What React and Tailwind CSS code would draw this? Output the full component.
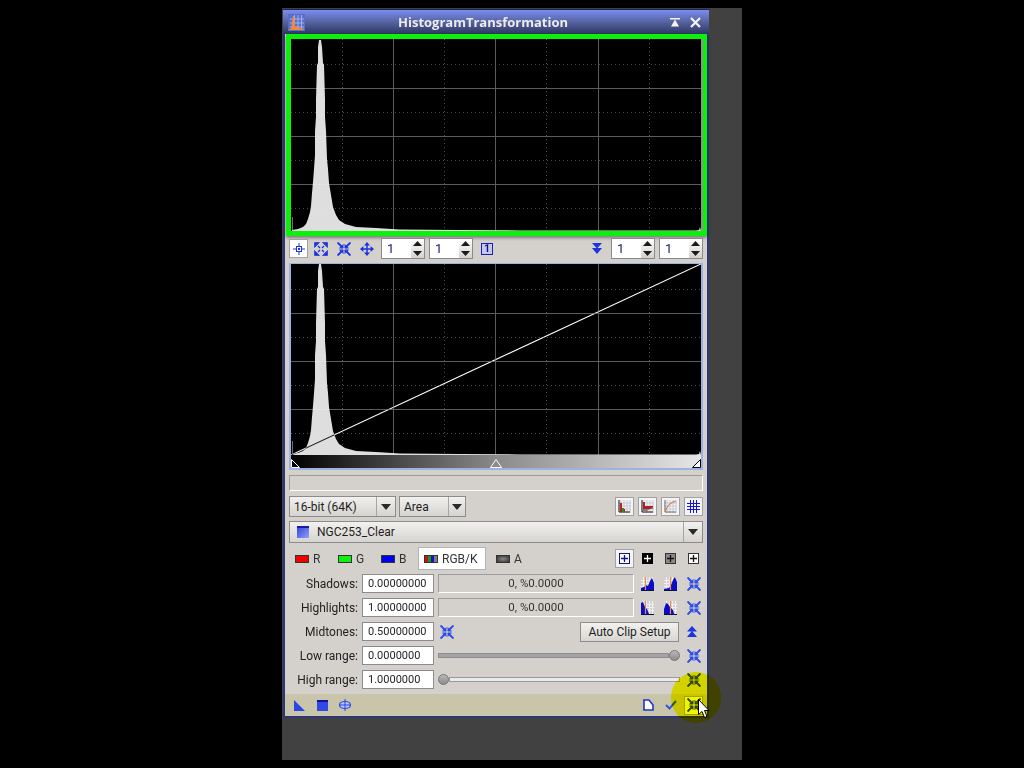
import React from 'react'

// histogram outline, screen x / distance from the base of the plot
const PROFILE = [
  [292, 0], [292, 1], [298, 2], [303, 4], [306, 7], [308, 12], [310, 19], [311, 25], [312, 38],
  [313, 49], [314, 62], [315, 76], [315, 100], [316, 114], [316, 132], [317, 166], [318, 168], [318, 184], [319, 191],
  [321, 191], [322, 184], [323, 168], [324, 166], [325, 132], [325, 114], [326, 100], [327, 72], [328, 62], [329, 48],
  [331, 36], [333, 24], [336, 16], [339, 11], [345, 7], [356, 4], [376, 3], [400, 1.5], [460, 1], [520, 0.6], [696, 0.4],
  [699, 1], [700, 4], [701, 0],
]

function Plot({ width, height, curve }) {
  const left = 291
  const pts = PROFILE.map(([x, h]) => `${x - left},${height - h}`).join(' ')
  const majorX = [393, 495, 598].map(x => x - left)
  const minorX = [342, 444, 546, 649].map(x => x - left)
  const majorY = [49, 97, 145]
  const minorY = [25, 73, 121, 169]
  return (
    <svg width={width} height={height} className="block bg-black shrink-0">
      {minorX.map(x => <line key={x} x1={x + 0.5} x2={x + 0.5} y1="0" y2={height} stroke="#4c4c4c" strokeDasharray="1 3" />)}
      {minorY.map(y => <line key={y} y1={y + 0.5} y2={y + 0.5} x1="0" x2={width} stroke="#4c4c4c" strokeDasharray="1 3" />)}
      {majorX.map(x => <line key={x} x1={x + 0.5} x2={x + 0.5} y1="0" y2={height} stroke="#5c5c5c" />)}
      {majorY.map(y => <line key={y} y1={y + 0.5} y2={y + 0.5} x1="0" x2={width} stroke="#5c5c5c" />)}
      <line x1="1.5" x2="1.5" y1={height - 14} y2={height} stroke="#707070" />
      <polygon points={`0,${height} ${pts} ${width},${height}`} fill="#eaeaea" fillOpacity="0.95" />
      {curve && <line x1="0" y1={height} x2={width} y2="0" stroke="#ffffff" strokeWidth="1.1" className="mix-blend-difference" />}
    </svg>
  )
}

function Collapse({ color = '#2a48e6', className = '' }) {
  return (
    <svg width="14" height="14" viewBox="0 0 14 14" className={className}>
      <g stroke={color} fill={color}>
        <path d="M0.5 0.5L4.5 4.5M13.5 0.5L9.5 4.5M0.5 13.5L4.5 9.5M13.5 13.5L9.5 9.5" strokeWidth="1.9" />
        <path d="M6.2 6.2H2.4L6.2 2.4ZM7.8 6.2H11.6L7.8 2.4ZM6.2 7.8H2.4L6.2 11.6ZM7.8 7.8H11.6L7.8 11.6Z" strokeWidth="0.5" />
      </g>
    </svg>
  )
}

function Expand() {
  return (
    <svg width="14" height="14" viewBox="0 0 14 14">
      <g fill="#1c34e0" stroke="#1c34e0">
        <path d="M0.5 0.5H5.5L0.5 5.5ZM13.5 0.5H8.5L13.5 5.5ZM0.5 13.5H5.5L0.5 8.5ZM13.5 13.5H8.5L13.5 8.5Z" strokeWidth="0.7" />
        <path d="M4 4L6 6M10 4L8 6M4 10L6 8M10 10L8 8" strokeWidth="1.3" fill="none" />
      </g>
    </svg>
  )
}

function Pan() {
  return (
    <svg width="14" height="14" viewBox="0 0 14 14">
      <path d="M7 1V13M1 7H13" stroke="#1c34e0" strokeWidth="1.5" />
      <path d="M7 0L10 3.4H4ZM7 14L10 10.6H4ZM0 7L3.4 4V10ZM14 7L10.6 4V10Z" fill="#1c34e0" />
    </svg>
  )
}

function Crosshair() {
  return (
    <svg width="12" height="12" viewBox="0 0 12 12">
      <path d="M6 0V12M0 6H12" stroke="#1c34e0" />
      <rect x="3.5" y="3.5" width="5" height="5" fill="#ffffff" stroke="#1c34e0" />
      <rect x="5" y="5" width="2" height="2" fill="#1c34e0" />
    </svg>
  )
}

function Arrow({ up }) {
  return (
    <svg width="9" height="5" viewBox="0 0 9 5">
      <path d={up ? 'M4.5 0L9 5H0Z' : 'M4.5 5L9 0H0Z'} fill="#1a1a1a" />
    </svg>
  )
}

function Spin({ className = '' }) {
  return (
    <div className={`w-[44px] h-[21px] flex border border-[#8a8a8a] bg-white ${className}`}>
      <span className="w-[29px] pl-[5px] text-[13px] leading-[19px] text-[#16166e]">1</span>
      <div className="flex-1 flex flex-col items-center justify-around bg-gradient-to-b from-[#ffffff] to-[#d4d2ce]">
        <Arrow up />
        <Arrow />
      </div>
    </div>
  )
}

function Combo({ label, className = '', arrowWidth = 'w-[19px]', icon }) {
  return (
    <div className={`flex items-center border border-[#8c8c8c] bg-gradient-to-b from-[#f2f1ef] to-[#d6d4d0] text-[12px] text-[#1e1e1e] ${className}`}>
      {icon}
      <span className="flex-1 pl-[4px] whitespace-nowrap">{label}</span>
      <div className={`h-full flex items-center justify-center border-l border-[#a5a5a5] ${arrowWidth}`}>
        <svg width="10" height="6" viewBox="0 0 10 6"><path d="M0 0H10L5 6Z" fill="#2a2a2a" /></svg>
      </div>
    </div>
  )
}

function ToolBtn({ children, className = '' }) {
  return (
    <div className={`w-[19px] h-[19px] flex items-center justify-center border border-[#a2a2a2] bg-[#f4f4f4] ${className}`}>
      {children}
    </div>
  )
}

function Bars({ kind }) {
  return (
    <svg width="13" height="13" viewBox="0 0 13 13">
      <path d="M3 0V13M6 0V13M9 0V13M12 0V13M0 3H13M0 6H13M0 9H13" stroke="#c8c8d8" />
      {kind === 0 && <path d="M1 0V12H12" stroke="#111" fill="none" />}
      {kind === 0 && <path d="M2 12V3H4V9H7V12Z" fill="#c02020" />}
      {kind === 0 && <path d="M4 12V8H6V12Z" fill="#209020" />}
      {kind === 1 && <path d="M1 0V12H12" stroke="#111" fill="none" />}
      {kind === 1 && <path d="M2 9V2H4V6H12V9Z" fill="#b02020" />}
      {kind === 1 && <path d="M2 12V9H12V7L6 11Z" fill="#808080" />}
      {kind === 2 && <path d="M1 0V12H12" stroke="#666" fill="none" />}
      {kind === 2 && <path d="M1 12C3 6 6 2 12 1" stroke="#d08050" strokeWidth="1.2" fill="none" />}
    </svg>
  )
}

function Plus({ bg, fg, border }) {
  return (
    <div className={`w-[11px] h-[11px] flex items-center justify-center border ${bg} ${border}`}>
      <svg width="7" height="7" viewBox="0 0 7 7"><path d="M3.5 0V7M0 3.5H7" stroke={fg} strokeWidth="1.3" /></svg>
    </div>
  )
}

// little histogram with the clipping marker; shape and marker differ per button
const CLIP = {
  a: { d: 'M0 13V11L3 10L5 8L7 9L9 4L11 1L13 6V13Z', line: 'M4.5 0V13' },
  b: { d: 'M0 13V12L5 11L7 8L9 3L11 0L13 5V13Z', line: 'M6.5 0V13' },
  c: { d: 'M0 13V2L2 1L4 6L6 8L8 13Z', line: 'M4.5 0V13' },
  d: { d: 'M0 13V8L2 2L4 3L6 6L9 9L10 13Z', line: 'M6.5 0V13' },
}

function Clip({ kind }) {
  const { d, line } = CLIP[kind]
  return (
    <svg width="13" height="14" viewBox="0 0 13 14">
      <path d="M2.5 0V13M5.5 0V13M8.5 0V13M11.5 0V13M0 3.5H13M0 6.5H13M0 9.5H13" stroke="#f0f0f4" />
      <path d={d} fill="#0c0cc4" />
      <path d={line} stroke="#e89050" strokeWidth="1.2" />
      <path d="M0 13.5H13" stroke="#101040" />
    </svg>
  )
}

function Chan({ swatch, label, className = '' }) {
  return (
    <div className={`flex items-center text-[12px] text-[#333] ${className}`}>
      {swatch}
      <span className="ml-[4px]">{label}</span>
    </div>
  )
}

function Input({ value }) {
  return (
    <div className="w-[72px] h-[19px] shrink-0 border border-[#8c8c8c] bg-white pl-[5px] text-[11px] leading-[18px] text-[#1e1e1e]">
      {value}
    </div>
  )
}

function Row({ label, value, children }) {
  return (
    <div className="flex items-center h-[19px] mb-[5px]">
      <span className="w-[73px] text-right text-[12px] text-[#222] whitespace-nowrap">{label}</span>
      <div className="w-[4px]" />
      <Input value={value} />
      {children}
    </div>
  )
}

function Readout() {
  return (
    <div className="w-[196px] h-[19px] ml-[4px] text-center text-[11.5px] leading-[17px] text-[#333] border border-t-[#9c9c9c] border-l-[#9c9c9c] border-r-white border-b-white">
      0, %0.0000
    </div>
  )
}

function Thumb() {
  return <div className="w-[11px] h-[11px] shrink-0 rounded-full border border-[#777] bg-gradient-to-b from-[#b8b8b8] to-[#8c8c8c]" />
}

export default function App() {
  return (
    <div className="relative h-screen bg-black overflow-hidden font-['Roboto',sans-serif]">
      <div className="ml-[282px] mt-[8px] w-[460px] h-[752px] pt-px pl-px bg-[#414141]">
        <div className="w-[426px] h-[709px] flex flex-col bg-[#d4d1cd] border-x-2 border-b-2 border-x-[#2c3678] border-b-[#2c3678]">
          {/* Title bar */}
          <div className="h-[25px] -mx-[2px] pt-px flex items-center bg-gradient-to-b from-[#7c8ef2] via-[#55639f] to-[#2e3764] border-t border-[#1d2350]">
            <svg width="17" height="17" viewBox="0 0 17 17" className="ml-[5px]">
              <rect width="17" height="17" fill="#5a6ec8" />
              <path d="M6.5 1V16M10 1V16M13.5 1V16M2 5H16M2 9H16M2 13H16" stroke="#9fb0e8" />
              <path d="M1 15H16V16H1ZM3 15L5 2H6L7 12L11 14L16 15Z" fill="#ee8a3c" />
            </svg>
            <span className="ml-[93px] w-[169px] text-center font-['Open_Sans',sans-serif] font-bold text-[13px] text-[#ececec] whitespace-nowrap">
              HistogramTransformation
            </span>
            <svg width="10" height="9" viewBox="0 0 10 9" className="ml-[103px]">
              <path d="M0 0H10V1.5H0ZM5 1.5L9 8.5H1Z" fill="#f4f4f4" />
            </svg>
            <svg width="11" height="11" viewBox="0 0 11 11" className="ml-[10px]">
              <path d="M1 1L10 10M10 1L1 10" stroke="#f4f4f4" strokeWidth="2.2" />
            </svg>
          </div>

          {/* Main graph */}
          <div className="ml-px w-[421px] h-[202px] flex border-l-[5px] border-r-[4px] border-y-[5px] border-[#0cf00c] shadow-[0_2px_3px_rgba(0,0,0,0.4)]">
            <Plot width={410} height={192} />
            <div className="w-[2px] bg-[#909090]" />
          </div>

          {/* Graph toolbar */}
          <div className="h-[27px] flex items-center pl-[4px] pb-[2px]">
            <ToolBtn className="bg-white"><Crosshair /></ToolBtn>
            <div className="ml-[6px]"><Expand /></div>
            <div className="ml-[9px]"><Collapse color="#1c34e0" /></div>
            <div className="ml-[9px]"><Pan /></div>
            <Spin className="ml-[7px]" />
            <Spin className="ml-[4px]" />
            <div className="ml-[8px] w-[12px] h-[12px] flex items-center justify-center border border-[#1c20b0] bg-[#c4c8ec] text-[10px] leading-none font-bold text-[#101080]">1</div>
            <svg width="10" height="11" viewBox="0 0 10 11" className="ml-[99px]">
              <path d="M0 0H10L5 5.5ZM0 5H10L5 11Z" fill="#1c34e0" />
            </svg>
            <Spin className="ml-[9px]" />
            <Spin className="ml-[4px]" />
          </div>

          {/* Curve editor */}
          <div className="ml-[4px] w-[414px] h-[207px] border-x-2 border-b-2 border-t border-[#9cb2e2]">
            <Plot width={410} height={191} curve />
            <div className="relative h-[13px] bg-[linear-gradient(to_right,#000000,#8a8a8a_50%,#e6e6e6)]">
              <svg width="9" height="9" viewBox="0 0 9 9" className="absolute left-0 bottom-0">
                <path d="M0.5 0.5V8.5H8.5Z" fill="#000000" stroke="#ffffff" />
              </svg>
              <svg width="12" height="9" viewBox="0 0 12 9" className="absolute left-[199px] bottom-0">
                <path d="M6 0.5L11.5 8.5H0.5Z" fill="#8a8a8a" stroke="#ffffff" />
              </svg>
              <svg width="9" height="9" viewBox="0 0 9 9" className="absolute right-0 bottom-0">
                <path d="M8.5 0.5V8.5H0.5Z" fill="#ffffff" stroke="#000000" />
              </svg>
            </div>
          </div>

          {/* Readout bar */}
          <div className="ml-[4px] mt-[5px] w-[414px] h-[16px] border border-t-[#9c9c9c] border-l-[#9c9c9c] border-r-white border-b-white" />

          {/* Resolution / style */}
          <div className="mt-[5px] h-[21px] flex items-center pl-[4px]">
            <Combo label="16-bit (64K)" className="w-[107px] h-[21px]" />
            <Combo label="Area" className="w-[67px] h-[21px] ml-[3px]" arrowWidth="w-[17px]" />
            <div className="ml-auto mr-[4px] flex gap-[4px]">
              <ToolBtn><Bars kind={0} /></ToolBtn>
              <ToolBtn><Bars kind={1} /></ToolBtn>
              <ToolBtn><Bars kind={2} /></ToolBtn>
              <ToolBtn>
                <svg width="13" height="13" viewBox="0 0 13 13">
                  <path d="M3.5 0V13M6.5 0V13M9.5 0V13M0 3.5H13M0 6.5H13M0 9.5H13" stroke="#1414d0" />
                </svg>
              </ToolBtn>
            </div>
          </div>

          {/* View selector */}
          <Combo
            label="NGC253_Clear"
            className="ml-[4px] mt-[4px] w-[414px] h-[22px]"
            icon={
              <svg width="12" height="12" viewBox="0 0 12 12" className="ml-[7px] mr-[4px]">
                <defs>
                  <linearGradient id="view" x1="0" y1="0" x2="1" y2="1">
                    <stop offset="0" stopColor="#3040e0" />
                    <stop offset="1" stopColor="#90a0f4" />
                  </linearGradient>
                </defs>
                <rect width="12" height="12" fill="url(#view)" />
                <path d="M0 1H12" stroke="#1a1aa0" strokeWidth="2" />
              </svg>
            }
          />

          {/* Channels */}
          <div className="mt-[4px] h-[23px] flex items-center pl-[10px]">
            <Chan label="R" className="w-[43px]" swatch={<div className="w-[14px] h-[8px] bg-[#f00000] border border-[#333]" />} />
            <Chan label="G" className="w-[43px]" swatch={<div className="w-[14px] h-[8px] bg-[#10f010] border border-[#333]" />} />
            <Chan label="B" className="w-[37px]" swatch={<div className="w-[14px] h-[8px] bg-[#0000f0] border border-[#333]" />} />
            <div className="w-[68px] h-[23px] flex items-center pl-[5px] bg-white border border-[#b4b4b4] text-[12px] text-[#333]">
              <div className="w-[14px] h-[8px] border border-[#333] bg-[linear-gradient(to_right,#d01010_0_25%,#10a010_25%_50%,#1010d0_50%_75%,#808080_75%)]" />
              <span className="ml-[4px]">RGB/K</span>
            </div>
            <Chan label="A" className="ml-[10px]" swatch={<div className="w-[14px] h-[8px] border border-[#333] bg-[radial-gradient(#888888,#333333)]" />} />
            <div className="ml-auto mr-[4px] flex items-center">
              <ToolBtn>
                <Plus bg="bg-white" fg="#10108a" border="border-[#10108a]" />
              </ToolBtn>
              <div className="ml-[8px]"><Plus bg="bg-black" fg="#ffffff" border="border-black" /></div>
              <div className="ml-[12px]"><Plus bg="bg-[#888888]" fg="#111111" border="border-[#333333]" /></div>
              <div className="ml-[12px] mr-[4px]"><Plus bg="bg-white" fg="#111111" border="border-[#333333]" /></div>
            </div>
          </div>

          {/* Parameters */}
          <div className="mt-[4px]">
            <Row label="Shadows:" value="0.00000000">
              <Readout />
              <div className="ml-[7px]"><Clip kind="a" /></div>
              <div className="ml-[10px]"><Clip kind="b" /></div>
              <Collapse className="ml-[10px]" />
            </Row>
            <Row label="Highlights:" value="1.00000000">
              <Readout />
              <div className="ml-[7px]"><Clip kind="c" /></div>
              <div className="ml-[10px]"><Clip kind="d" /></div>
              <Collapse className="ml-[10px]" />
            </Row>
            <Row label="Midtones:" value="0.50000000">
              <Collapse className="ml-[6px]" />
              <div className="ml-auto flex items-center">
                <div className="h-[20px] w-[99px] text-center text-[12px] leading-[18px] text-[#1e1e1e] border border-[#8c8c8c] bg-gradient-to-b from-[#f2f1ef] to-[#d8d6d2] whitespace-nowrap">
                  Auto Clip Setup
                </div>
                <svg width="10" height="11" viewBox="0 0 10 11" className="ml-[8px] mr-[10px]">
                  <path d="M5 0L10 5.5H0ZM5 5L10 11H0Z" fill="#1c34e0" />
                </svg>
              </div>
            </Row>
            <Row label="Low range:" value="0.0000000">
              <div className="ml-[4px] w-[242px] flex items-center">
                <div className="flex-1 h-[5px] bg-[#a4a4a4] border border-[#8c8c8c]" />
                <Thumb />
              </div>
              <Collapse className="ml-[7px]" />
            </Row>
            <Row label="High range:" value="1.0000000">
              <div className="ml-[4px] w-[242px] flex items-center">
                <Thumb />
                <div className="flex-1 h-[5px] bg-[#ebebeb] border border-[#9a9a9a]" />
              </div>
              <Collapse className="ml-[7px]" />
            </Row>
          </div>

          {/* Bottom tool strip */}
          <div className="mt-auto h-[22px] flex items-center pl-[9px] bg-[#c8c5aa]">
            <svg width="11" height="11" viewBox="0 0 11 11">
              <path d="M0 0L11 11H0Z" fill="#2a44e6" />
            </svg>
            <svg width="11" height="11" viewBox="0 0 11 11" className="ml-[12px]">
              <rect width="11" height="11" fill="#3048e6" />
              <rect width="11" height="2" fill="#10109a" />
            </svg>
            <svg width="12" height="12" viewBox="0 0 12 12" className="ml-[11px]">
              <ellipse cx="6" cy="6" rx="5.5" ry="3.5" fill="#bcc8f4" stroke="#2a44e6" strokeWidth="1.2" />
              <path d="M6 0V12M1 6H11" stroke="#2a44e6" />
            </svg>
            <svg width="11" height="12" viewBox="0 0 11 12" className="ml-[292px]">
              <path d="M1 1H6L10 6V11H1Z" fill="#ffffff" stroke="#1c34c8" strokeWidth="1.6" />
            </svg>
            <svg width="12" height="10" viewBox="0 0 12 10" className="ml-[11px]">
              <path d="M1 5L4.5 8.5L11 1" fill="none" stroke="#2a5ae0" strokeWidth="2" />
            </svg>
            <ToolBtn className="ml-[7px]"><Collapse /></ToolBtn>
          </div>
        </div>
      </div>

      {/* Mouse highlight */}
      <div className="absolute left-[671px] top-[672px] w-[50px] h-[51px] rounded-full bg-[#ffff00] mix-blend-multiply" />
      <svg width="13" height="20" viewBox="0 0 13 20" className="absolute left-[698px] top-[699px]">
        <path d="M0.5 0.5V15.5L4 12.5L6.5 18.5L9 17.5L6.5 11.5H11Z" fill="#ffffff" stroke="#000000" />
      </svg>
    </div>
  )
}
